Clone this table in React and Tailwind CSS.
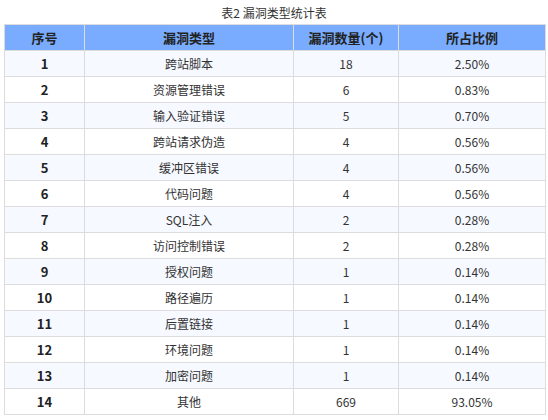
import React from 'react'

const rows = [
  ['1', '跨站脚本', '18', '2.50%'],
  ['2', '资源管理错误', '6', '0.83%'],
  ['3', '输入验证错误', '5', '0.70%'],
  ['4', '跨站请求伪造', '4', '0.56%'],
  ['5', '缓冲区错误', '4', '0.56%'],
  ['6', '代码问题', '4', '0.56%'],
  ['7', 'SQL注入', '2', '0.28%'],
  ['8', '访问控制错误', '2', '0.28%'],
  ['9', '授权问题', '1', '0.14%'],
  ['10', '路径遍历', '1', '0.14%'],
  ['11', '后置链接', '1', '0.14%'],
  ['12', '环境问题', '1', '0.14%'],
  ['13', '加密问题', '1', '0.14%'],
  ['14', '其他', '669', '93.05%'],
]

export default function App() {
  return (
    <div
      className="w-[548px] h-[420px] bg-white text-[#333] px-[4px]"
      style={{ fontFamily: '"Noto Sans CJK SC", "Noto Sans", sans-serif' }}
    >
      <div className="h-[24px] flex items-center justify-center text-[12px] pt-[1px]">
        表2 漏洞类型统计表
      </div>
      <table className="w-[541px] border-collapse table-fixed text-[12px]">
        <colgroup>
          <col className="w-[80px]" />
          <col className="w-[209px]" />
          <col className="w-[105px]" />
          <col className="w-[147px]" />
        </colgroup>
        <thead>
          <tr className="h-[26px] bg-[#79acff]">
            {['序号', '漏洞类型', '漏洞数量(个)', '所占比例'].map((h) => (
              <th key={h} className="border border-[#dcdcdc] font-bold text-[13px] text-[#222] p-0 leading-none">
                {h}
              </th>
            ))}
          </tr>
        </thead>
        <tbody>
          {rows.map((r, i) => (
            <tr key={r[0]} className={`h-[26px] ${i % 2 === 0 ? 'bg-[#f6f9ff]' : 'bg-white'}`}>
              <td className="border border-[#dcdcdc] text-center font-bold text-[13px] text-[#222] p-0 leading-none">{r[0]}</td>
              <td className="border border-[#dcdcdc] text-center p-0 leading-none">{r[1]}</td>
              <td className="border border-[#dcdcdc] text-center p-0 leading-none">{r[2]}</td>
              <td className="border border-[#dcdcdc] text-center p-0 leading-none">{r[3]}</td>
            </tr>
          ))}
        </tbody>
      </table>
    </div>
  )
}
